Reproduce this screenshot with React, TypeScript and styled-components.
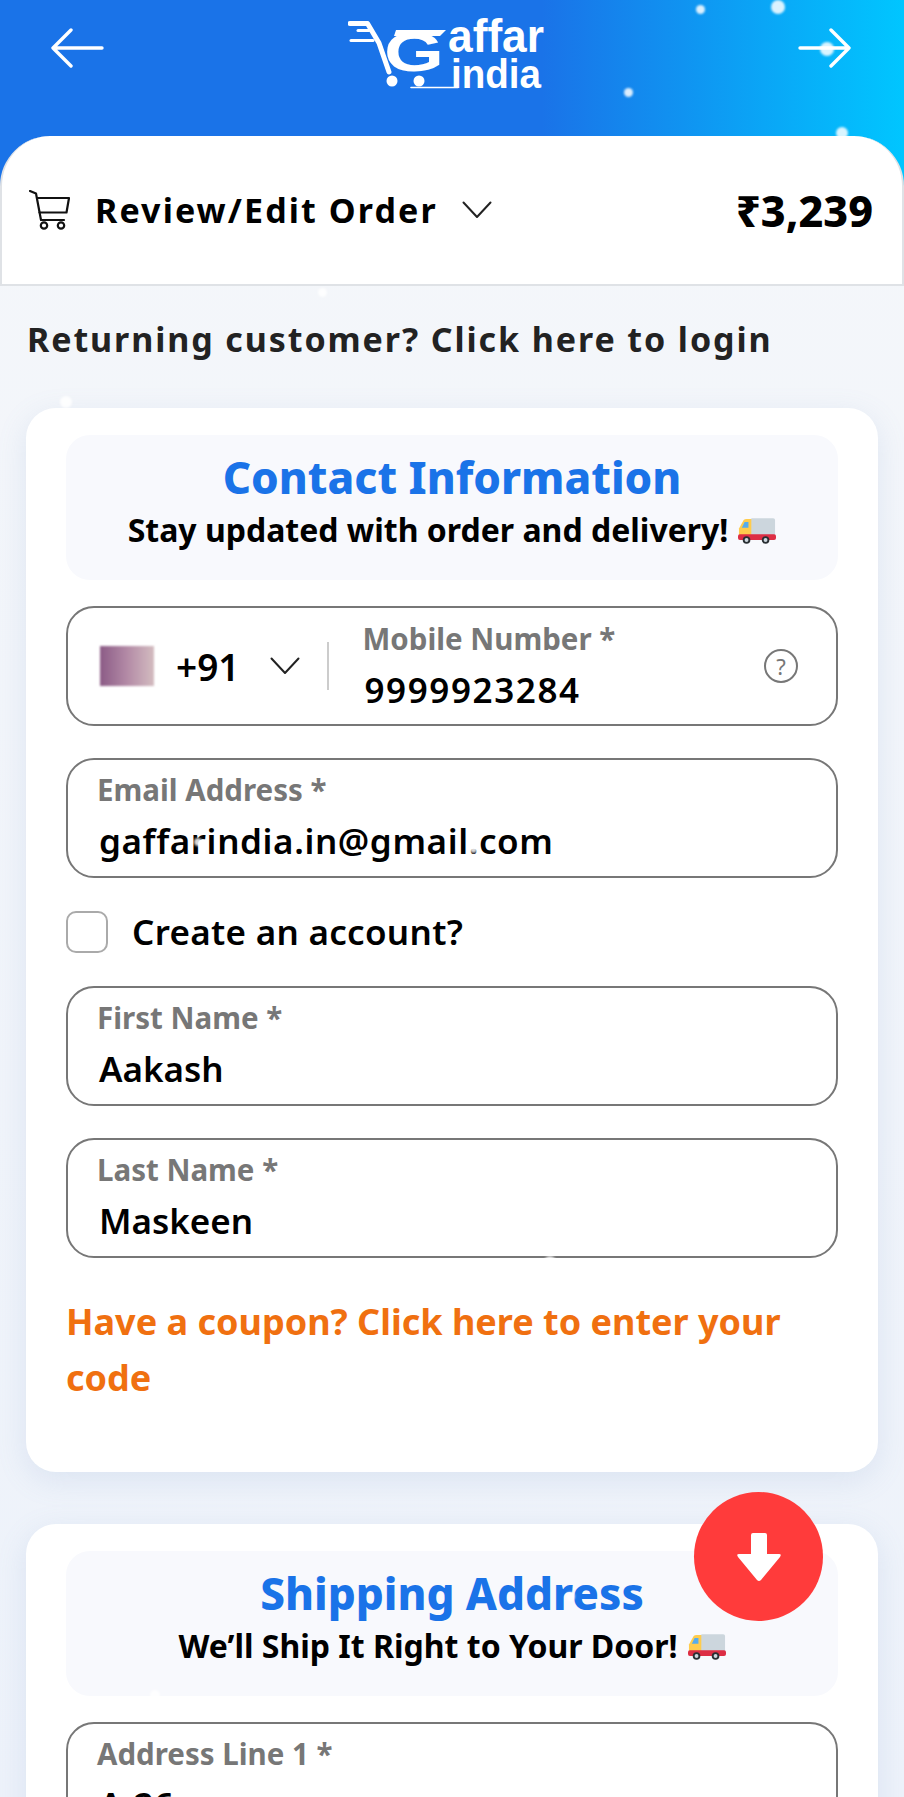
import React from "react";
import styled, { createGlobalStyle } from "styled-components";

const GlobalStyle = createGlobalStyle`
  html, body {
    margin: 0;
    padding: 0;
    background: #f3f6fb;
  }
  * {
    box-sizing: border-box;
  }
`;

const sparkles = [
  { x: 696, y: 5, size: 9 },
  { x: 771, y: 0, size: 14 },
  { x: 624, y: 88, size: 9 },
  { x: 836, y: 127, size: 12 },
  { x: 820, y: 42, size: 14 },
  { x: 318, y: 288, size: 9 },
  { x: 60, y: 396, size: 12 },
  { x: 194, y: 838, size: 8 },
  { x: 470, y: 846, size: 7 },
  { x: 544, y: 1256, size: 12 },
  { x: 566, y: 1592, size: 9 },
  { x: 150, y: 1690, size: 10 },
];

// Small delivery truck used after the section subtitles
const TruckIcon = () => (
  <TruckSvg viewBox="0 0 40 30" aria-hidden="true">
    <rect x="13" y="2" width="26" height="19" rx="2" fill="#ccd6dd" />
    <path d="M1 20 L1 13 L6 4 Q7 3 9 3 L14 3 L14 21 L1 21 Z" fill="#ffcc4d" />
    <path d="M4 12 L7 6 L11 6 L11 12 Z" fill="#55acee" />
    <rect x="0" y="19" width="40" height="6" rx="2" fill="#dd2e44" />
    <circle cx="9" cy="25" r="4" fill="#292f33" />
    <circle cx="9" cy="25" r="2" fill="#ccd6dd" />
    <circle cx="29" cy="25" r="4" fill="#292f33" />
    <circle cx="29" cy="25" r="2" fill="#ccd6dd" />
  </TruckSvg>
);

const Logo = () => (
  <LogoSvg viewBox="0 0 200 76" aria-label="Gaffar india">
    <g fill="none" stroke="#fff" strokeLinecap="round" strokeLinejoin="round">
      <path d="M2 6.5 H19.5 L31 26 L41 55" strokeWidth="5" />
      <path d="M10 13.5 H21" strokeWidth="3" />
      <path d="M3 23.5 H25" strokeWidth="3" />
      <path d="M63 70.5 H110" strokeWidth="1.6" />
    </g>
    <circle cx="44" cy="64" r="5.5" fill="#fff" />
    <circle cx="71" cy="64" r="5.5" fill="#fff" />
    <LogoG x="36" y="54" textLength="60" lengthAdjust="spacingAndGlyphs">
      G
    </LogoG>
    <path d="M48 13 H98 L92 19 H46 Z" fill="#fff" />
    <LogoWord x="100" y="35" textLength="96" lengthAdjust="spacingAndGlyphs">
      affar
    </LogoWord>
    <LogoIndia x="103" y="71" textLength="90" lengthAdjust="spacingAndGlyphs">
      india
    </LogoIndia>
  </LogoSvg>
);

const HeaderArrow = ({ flip }: { flip?: boolean }) => (
  <ArrowSvg viewBox="0 0 54 40" $flip={flip} aria-hidden="true">
    <path d="M52 20 H3 M21 2 L3 20 L21 38" />
  </ArrowSvg>
);

const Chevron = () => (
  <ChevronSvg viewBox="0 0 30 18" aria-hidden="true">
    <path d="M1.5 1.5 L15 16 L28.5 1.5" />
  </ChevronSvg>
);

const CartIcon = () => (
  <CartSvg viewBox="0 0 42 40" aria-hidden="true">
    <path d="M1 1 L7 3.5 L12 30 H35" />
    <path d="M8 8 H40 L37.5 22.5 H10.5" />
    <circle cx="15" cy="35.5" r="3.2" />
    <circle cx="32" cy="35.5" r="3.2" />
  </CartSvg>
);

const Field = ({ label, value, tracking }: { label: string; value: string; tracking?: number }) => (
  <FieldBox>
    <FieldLabel>{label}</FieldLabel>
    <FieldValue $tracking={tracking}>{value}</FieldValue>
  </FieldBox>
);

const App: React.FC = () => {
  return (
    <Page>
      <GlobalStyle />
      <Header>
        <HeaderArrow />
        <Logo />
        <HeaderArrow flip />
      </Header>

      <OrderBar>
        <OrderLeft>
          <CartIcon />
          <OrderTitle>Review/Edit Order</OrderTitle>
          <Chevron />
        </OrderLeft>
        <OrderTotal>₹3,239</OrderTotal>
      </OrderBar>

      <LoginLine>Returning customer? Click here to login</LoginLine>

      <Card>
        <SectionHead>
          <SectionTitle>Contact Information</SectionTitle>
          <SectionSub>
            Stay updated with order and delivery! <TruckIcon />
          </SectionSub>
        </SectionHead>

        <PhoneBox>
          <Flag />
          <DialCode>+91</DialCode>
          <Chevron />
          <Divider />
          <PhoneInfo>
            <FieldLabel>Mobile Number *</FieldLabel>
            <FieldValue $tracking={1.6}>9999923284</FieldValue>
          </PhoneInfo>
          <HelpBadge>?</HelpBadge>
        </PhoneBox>

        <Field label="Email Address *" value="gaffarindia.in@gmail.com" tracking={0.6} />

        <CheckRow>
          <CheckBox />
          <CheckLabel>Create an account?</CheckLabel>
        </CheckRow>

        <Field label="First Name *" value="Aakash" />
        <Field label="Last Name *" value="Maskeen" />

        <Coupon>Have a coupon? Click here to enter your code</Coupon>
      </Card>

      <Card>
        <SectionHead>
          <SectionTitle>Shipping Address</SectionTitle>
          <SectionSub>
            We’ll Ship It Right to Your Door! <TruckIcon />
          </SectionSub>
        </SectionHead>
        <Field label="Address Line 1 *" value="A-26" />
      </Card>

      <ScrollButton>
        <svg width="46" height="50" viewBox="0 0 46 50" aria-hidden="true">
          <path
            d="M15 3 Q15 1 17 1 H29 Q31 1 31 3 V22 H43 Q46 22 44 25 L25 48 Q23 50 21 48 L2 25 Q0 22 3 22 H15 Z"
            fill="#fff"
          />
        </svg>
      </ScrollButton>

      {sparkles.map((s, i) => (
        <Sparkle key={i} style={{ left: s.x, top: s.y, width: s.size, height: s.size }} />
      ))}
    </Page>
  );
};

const Page = styled.div`
  position: relative;
  width: 904px;
  height: 1797px;
  overflow: hidden;
  background: linear-gradient(180deg, #f5f7fa 0%, #edf2fa 100%);
  font-family: "Noto Sans", "Open Sans", "Liberation Sans", sans-serif;
  color: #000;
`;

const Header = styled.header`
  height: 190px;
  padding: 17px 52px 0 50px;
  display: flex;
  align-items: flex-start;
  justify-content: space-between;
  background: linear-gradient(90deg, #1a73e8 0%, #1a73e8 60%, #00c6ff 100%);
`;

const ArrowSvg = styled.svg<{ $flip?: boolean }>`
  width: 54px;
  height: 40px;
  margin-top: 11px;
  transform: ${(p) => (p.$flip ? "scaleX(-1)" : "none")};
  fill: none;
  stroke: #fff;
  stroke-width: 3.4;
  stroke-linecap: round;
  stroke-linejoin: round;
`;

const LogoSvg = styled.svg`
  width: 200px;
  height: 76px;
  margin-left: -6px;
`;

const LogoG = styled.text`
  font-family: "Liberation Sans", sans-serif;
  font-size: 56px;
  font-weight: 700;
  fill: #fff;
`;

const LogoWord = styled.text`
  font-family: "Liberation Sans", sans-serif;
  font-size: 46px;
  font-weight: 700;
  fill: #fff;
`;

const LogoIndia = styled(LogoWord)`
  font-size: 41px;
`;

const OrderBar = styled.div`
  position: relative;
  margin-top: -54px;
  height: 150px;
  padding: 0 29px 0 27px;
  display: flex;
  align-items: center;
  justify-content: space-between;
  background: #fff;
  border-radius: 50px 50px 0 0;
  border: 2px solid #dfe2e6;
  border-top: none;
`;

const OrderLeft = styled.div`
  display: flex;
  align-items: center;
  gap: 24px;
`;

const CartSvg = styled.svg`
  width: 42px;
  height: 40px;
  fill: none;
  stroke: #111;
  stroke-width: 2.2;
  stroke-linecap: round;
  stroke-linejoin: round;
`;

const ChevronSvg = styled.svg`
  width: 30px;
  height: 18px;
  flex: none;
  fill: none;
  stroke: #222;
  stroke-width: 2;
  stroke-linecap: round;
  stroke-linejoin: round;
`;

const OrderTitle = styled.span`
  font-size: 34px;
  font-weight: 700;
  letter-spacing: 2.1px;
`;

const OrderTotal = styled.span`
  font-size: 43px;
  font-weight: 800;
`;

const LoginLine = styled.p`
  margin: 30px 0 46px 27px;
  font-size: 34px;
  line-height: 46px;
  font-weight: 700;
  letter-spacing: 1.9px;
  color: #222;
`;

const Card = styled.section`
  margin: 0 26px 52px;
  padding: 27px 40px 66px;
  display: flex;
  flex-direction: column;
  gap: 32px;
  background: #fff;
  border-radius: 30px;
  box-shadow: 0 8px 30px rgba(120, 150, 200, 0.16);
`;

const SectionHead = styled.div`
  height: 145px;
  margin-bottom: -6px;
  padding-top: 12px;
  text-align: center;
  background: #f8f9fd;
  border-radius: 24px;
`;

const SectionTitle = styled.h2`
  margin: 0;
  font-size: 44px;
  line-height: 60px;
  font-weight: 800;
  color: #1a73e8;
`;

const SectionSub = styled.p`
  margin: 0;
  font-size: 32px;
  line-height: 46px;
  font-weight: 700;
  display: flex;
  align-items: center;
  justify-content: center;
  gap: 10px;
`;

const TruckSvg = styled.svg`
  width: 38px;
  height: 29px;
`;

const FieldBox = styled.div`
  height: 120px;
  padding: 10px 32px 0 29px;
  border: 2px solid #777;
  border-radius: 28px;
`;

const FieldLabel = styled.div`
  font-size: 29.5px;
  line-height: 40px;
  font-weight: 700;
  color: #777;
`;

const FieldValue = styled.div<{ $tracking?: number }>`
  margin: 7px 0 0 2px;
  font-size: 35px;
  line-height: 48px;
  font-weight: 600;
  letter-spacing: ${(p) => p.$tracking ?? 0}px;
  color: #000;
`;

const PhoneBox = styled(FieldBox)`
  display: flex;
  align-items: center;
  padding: 0 38px 0 32px;
`;

const Flag = styled.div`
  width: 54px;
  height: 40px;
  flex: none;
  background: linear-gradient(90deg, #8b5b86 0%, #b38aa6 50%, #d3bcc0 100%);
  filter: blur(1px);
`;

const DialCode = styled.span`
  margin: 0 30px 0 22px;
  font-size: 37px;
  font-weight: 600;
`;

const Divider = styled.div`
  width: 2px;
  height: 48px;
  margin: 0 34px 0 27px;
  background: #ccc;
`;

const PhoneInfo = styled.div`
  flex: 1;
`;

const HelpBadge = styled.span`
  width: 34px;
  height: 34px;
  border: 2px solid #777;
  border-radius: 50%;
  display: flex;
  align-items: center;
  justify-content: center;
  font-size: 22px;
  color: #777;
`;

const CheckRow = styled.div`
  height: 44px;
  display: flex;
  align-items: center;
  gap: 24px;
`;

const CheckBox = styled.div`
  width: 42px;
  height: 42px;
  border: 2px solid #aaa;
  border-radius: 10px;
  background: #fff;
`;

const CheckLabel = styled.span`
  font-size: 35px;
  line-height: 42px;
  font-weight: 600;
  letter-spacing: 0.3px;
`;

const Coupon = styled.p`
  margin: 4px 0 0;
  font-size: 36px;
  line-height: 56px;
  font-weight: 700;
  color: #f07010;
`;

const ScrollButton = styled.div`
  position: absolute;
  left: 694px;
  top: 1492px;
  width: 129px;
  height: 129px;
  border-radius: 50%;
  background: #ff3b3b;
  display: flex;
  align-items: center;
  justify-content: center;
`;

const Sparkle = styled.span`
  position: absolute;
  border-radius: 50%;
  background: rgba(255, 255, 255, 0.85);
  filter: blur(1px);
`;

export default App;
